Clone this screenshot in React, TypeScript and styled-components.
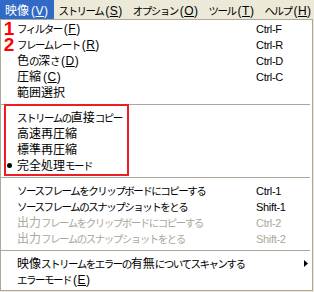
import styled, { createGlobalStyle } from 'styled-components'

const GlobalStyle = createGlobalStyle`
  html, body {
    margin: 0;
    padding: 0;
    background: #ece9d8;
  }
  body {
    font-family: "Noto Sans CJK JP", "Noto Sans", sans-serif;
    font-size: 12px;
    color: #000;
  }
`

const Screen = styled.div`
  width: 314px;
  height: 292px;
  background: #ece9d8;
  overflow: hidden;
`

const MenuBar = styled.div`
  display: flex;
  height: 19px;
`

const MenuTitle = styled.div<{ $active?: boolean }>`
  padding: 0 5px;
  line-height: 19px;
  white-space: nowrap;
  background: ${(p) => (p.$active ? '#316ac5' : 'transparent')};
  color: ${(p) => (p.$active ? '#fff' : '#000')};
`

// the old UI font packs kana much tighter than kanji
const Kana = styled.span`
  font-size: 10.5px;
  letter-spacing: -1.5px;
`

const Key = styled.span`
  font-family: "Liberation Sans", Arial, sans-serif;
  font-size: 12px;
  letter-spacing: 0.5px;
  margin-left: 2px;
`

const Dropdown = styled.div`
  width: 311px;
  border: 1px solid #aca899;
  background: #fff;
  padding-bottom: 3px;
`

const Row = styled.div<{ $disabled?: boolean }>`
  display: grid;
  grid-template-columns: 16px 1fr 56px;
  align-items: center;
  height: 16px;
  line-height: 16px;
  white-space: nowrap;
  color: ${(p) => (p.$disabled ? '#aca899' : '#000')};
`

const Gutter = styled.span`
  display: flex;
  justify-content: center;
  align-items: center;
  height: 16px;
`

const Annotation = styled.span`
  font-family: "Liberation Sans", Arial, sans-serif;
  font-weight: 700;
  font-size: 19px;
  line-height: 16px;
  color: #ff0000;
`

const Bullet = styled.span`
  width: 5px;
  height: 5px;
  border-radius: 50%;
  background: #000;
`

const Label = styled.span`
  overflow: visible;
`

const Shortcut = styled.span`
  display: flex;
  justify-content: space-between;
  align-items: center;
  padding-right: 4px;
  font-family: "Liberation Sans", Arial, sans-serif;
  font-size: 11px;
  letter-spacing: -0.3px;
`

const Separator = styled.div`
  height: 9px;
  display: flex;
  align-items: center;
  padding: 0 2px 0 0;

  &::after {
    content: '';
    flex: 1;
    height: 1px;
    margin-top: -1px;
    background: #aca899;
  }
`

const Highlighted = styled.div`
  position: relative;
`

const HighlightFrame = styled.div`
  position: absolute;
  top: -5px;
  bottom: -3px;
  left: 3px;
  width: 125px;
  box-sizing: border-box;
  border: 2px solid #ee1c24;
  pointer-events: none;
`

type Item = {
  label: string
  key?: string
  shortcut?: string
  disabled?: boolean
  mark?: 'bullet' | string
  submenu?: boolean
}

const menus = [
  { label: '映像', key: 'V', active: true },
  { label: 'ストリーム', key: 'S' },
  { label: 'オプション', key: 'O' },
  { label: 'ツール', key: 'T' },
  { label: 'ヘルプ', key: 'H' },
]

const basicItems: Item[] = [
  { label: 'フィルター', key: 'F', shortcut: 'Ctrl-F', mark: '1' },
  { label: 'フレームレート', key: 'R', shortcut: 'Ctrl-R', mark: '2' },
  { label: '色の深さ', key: 'D', shortcut: 'Ctrl-D' },
  { label: '圧縮', key: 'C', shortcut: 'Ctrl-C' },
  { label: '範囲選択' },
]

const modeItems: Item[] = [
  { label: 'ストリームの直接コピー' },
  { label: '高速再圧縮' },
  { label: '標準再圧縮' },
  { label: '完全処理モード', mark: 'bullet' },
]

const copyItems: Item[] = [
  { label: 'ソースフレームをクリップボードにコピーする', shortcut: 'Ctrl-1' },
  { label: 'ソースフレームのスナップショットをとる', shortcut: 'Shift-1' },
  { label: '出力フレームをクリップボードにコピーする', shortcut: 'Ctrl-2', disabled: true },
  { label: '出力フレームのスナップショットをとる', shortcut: 'Shift-2', disabled: true },
]

const scanItems: Item[] = [
  { label: '映像ストリームをエラーの有無についてスキャンする', submenu: true },
  { label: 'エラーモード', key: 'E' },
]

const KANA = /^[\u3040-\u30ff]/

const JaText = ({ text }: { text: string }) => (
  <>
    {(text.match(/[\u3040-\u30ff]+|[^\u3040-\u30ff]+/g) ?? []).map((run, i) =>
      KANA.test(run) ? <Kana key={i}>{run}</Kana> : <span key={i}>{run}</span>
    )}
  </>
)

const Mnemonic = ({ label, k }: { label: string; k?: string }) => (
  <>
    <JaText text={label} />
    {k && (
      <Key>
        (<u>{k}</u>)
      </Key>
    )}
  </>
)

const SubmenuArrow = () => (
  <svg width="4" height="7" viewBox="0 0 4 7">
    <path d="M0 0L4 3.5L0 7z" fill="#000" />
  </svg>
)

const MenuRow = ({ item }: { item: Item }) => (
  <Row $disabled={item.disabled}>
    <Gutter>
      {item.mark === 'bullet' ? (
        <Bullet />
      ) : item.mark ? (
        <Annotation>{item.mark}</Annotation>
      ) : null}
    </Gutter>
    <Label>
      <Mnemonic label={item.label} k={item.key} />
    </Label>
    <Shortcut>
      <span>{item.shortcut}</span>
      {item.submenu && <SubmenuArrow />}
    </Shortcut>
  </Row>
)

const App = () => (
  <Screen>
    <GlobalStyle />
    <MenuBar>
      {menus.map((m) => (
        <MenuTitle key={m.key} $active={m.active}>
          <Mnemonic label={m.label} k={m.key} />
        </MenuTitle>
      ))}
    </MenuBar>
    <Dropdown>
      {basicItems.map((it) => (
        <MenuRow key={it.label} item={it} />
      ))}
      <Separator />
      <Highlighted>
        {modeItems.map((it) => (
          <MenuRow key={it.label} item={it} />
        ))}
        <HighlightFrame />
      </Highlighted>
      <Separator />
      {copyItems.map((it) => (
        <MenuRow key={it.label} item={it} />
      ))}
      <Separator />
      {scanItems.map((it) => (
        <MenuRow key={it.label} item={it} />
      ))}
    </Dropdown>
  </Screen>
)

export default App
